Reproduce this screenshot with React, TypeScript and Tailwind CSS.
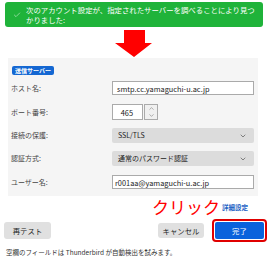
import { ChevronDown, ChevronUp, Check } from "lucide-react"

const jp = { fontFamily: '"Noto Sans CJK JP", "Liberation Sans", sans-serif' }

function Row({ label, children, mt }: { label: string; children: React.ReactNode; mt: string }) {
     return (
          <div className={`flex items-center ${mt}`}>
               <div className="w-[101px] text-[7px] leading-[9px] text-[#444]">{label}</div>
               {children}
          </div>
     )
}

function Select({ value }: { value: string }) {
     return (
          <div className="flex h-[15px] w-[142px] items-center justify-between rounded-[2px] bg-[#dcdcdc] pl-[6px] pr-[7px] text-[7px] leading-[9px] text-[#222]">
               <span>{value}</span>
               <ChevronDown size={8} strokeWidth={1.5} />
          </div>
     )
}

export default function App() {
     return (
          <div className="h-[259px] w-[268px] overflow-hidden bg-white" style={jp}>
               <div className="mx-[5px] mt-[2px] flex h-[25px] items-center rounded-[3px] bg-[#1fb33a] pl-[8px] pr-[6px] text-white">
                    <Check size={8} strokeWidth={1.4} className="shrink-0" />
                    <p className="ml-[5px] text-[7.4px] leading-[10px]">
                         次のアカウント設定が、指定されたサーバーを調べることにより見つかりました:
                    </p>
               </div>

               <div className="mt-[3px] flex h-[27px] justify-center">
                    <svg width="38" height="27" viewBox="0 0 38 27" className="block">
                         <polygon points="9,0 30,0 30,13 37,13 19,27 0,13 9,13" fill="#ff0000" />
                    </svg>
               </div>

               <div className="mx-[8px] mt-[1px] w-[250px] bg-[#f5f5f5] pb-[7px] pl-[3px] pr-[4px] pt-[8px]">
                    <div className="ml-[1px] flex h-[9px] w-fit items-center rounded-[2px] bg-[#1467d2] px-[3px] text-[6px] font-bold leading-[9px] text-white">
                         送信サーバー
                    </div>
                    <Row label="ホスト名:" mt="mt-[6px]">
                         <div className="flex h-[14px] w-[142px] items-center border border-[#aaa] bg-white pl-[4px] text-[7.4px] leading-[9px] text-[#222]">
                              smtp.cc.yamaguchi-u.ac.jp
                         </div>
                    </Row>
                    <Row label="ポート番号:" mt="mt-[9px]">
                         <div className="flex h-[16px]">
                              <div className="flex w-[31px] items-center justify-end border border-[#aaa] bg-white pr-[9px] text-[7.4px] leading-[9px] text-[#222]">
                                   465
                              </div>
                              <div className="ml-[1px] flex w-[14px] flex-col items-center justify-center border border-[#aaa] bg-[#f0f0f0] text-[#555]">
                                   <ChevronUp size={7} strokeWidth={1.5} />
                                   <ChevronDown size={7} strokeWidth={1.5} />
                              </div>
                         </div>
                    </Row>
                    <Row label="接続の保護:" mt="mt-[8px]">
                         <Select value="SSL/TLS" />
                    </Row>
                    <Row label="認証方式:" mt="mt-[8px]">
                         <Select value="通常のパスワード認証" />
                    </Row>
                    <Row label="ユーザー名:" mt="mt-[9px]">
                         <div className="flex h-[14px] w-[142px] items-center border border-[#aaa] bg-white pl-[2px] text-[7.4px] leading-[9px] text-[#222]">
                              r001aa@yamaguchi-u.ac.jp
                         </div>
                    </Row>
               </div>

               <div className="mt-[1px] flex h-[19px] items-end justify-end pr-[20px]">
                    <span className="text-[17px] leading-[19px] text-[#ff0000]">クリック</span>
                    <span className="mb-[5px] ml-[2px] text-[6.5px] font-bold leading-[8px] text-[#1a5fc4]">詳細設定</span>
               </div>

               <div className="mt-[3px] flex items-center pl-[4px] pr-[1px]">
                    <button className="h-[17px] w-[47px] rounded-[3px] bg-[#e0e0e0] text-[7.4px] leading-[9px] text-[#222]">
                         再テスト
                    </button>
                    <button className="ml-auto h-[15px] w-[46px] rounded-[3px] bg-[#e0e0e0] text-[7.4px] leading-[9px] text-[#222]">
                         キャンセル
                    </button>
                    <div className="ml-[8px] rounded-[4px] border-2 border-[#e00000] p-[1px]">
                         <button className="block h-[17px] w-[49px] rounded-[2px] bg-[#0a62dc] text-[7.4px] leading-[9px] text-white">
                              完了
                         </button>
                    </div>
               </div>

               <p className="mt-[6px] pl-[6px] text-[6.5px] leading-[9px] text-[#333]">
                    空欄のフィールドは Thunderbird が自動検出を試みます。
               </p>
          </div>
     )
}
